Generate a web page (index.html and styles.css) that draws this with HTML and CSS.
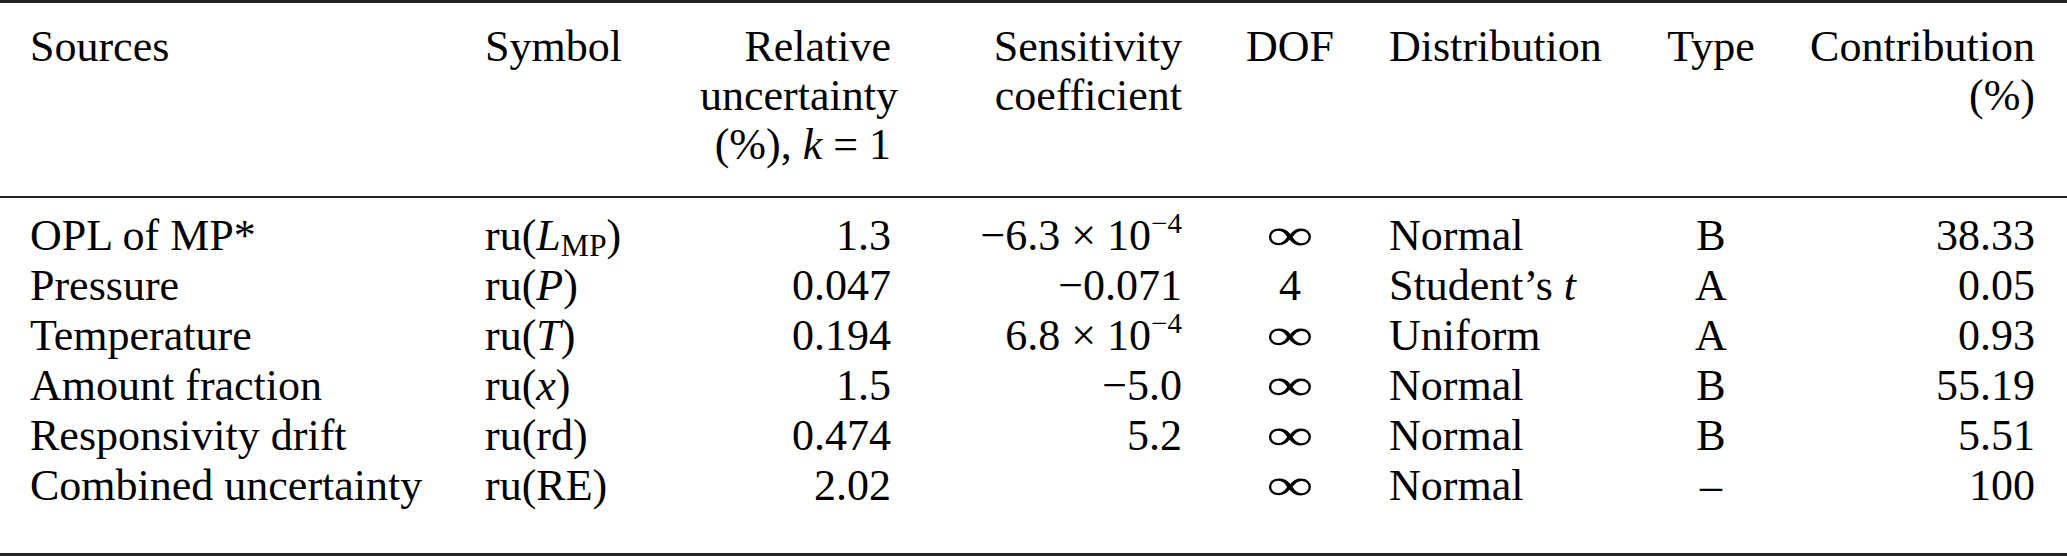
FILE: index.html
```html
<!DOCTYPE html>
<html lang="en">
<head>
<meta charset="utf-8">
<title>Uncertainty budget</title>
<link rel="stylesheet" href="styles.css">
</head>
<body>
<table class="budget">
  <colgroup>
    <col class="c1"><col class="c2"><col class="c3"><col class="c4">
    <col class="c5"><col class="c6"><col class="c7"><col class="c8">
  </colgroup>
  <thead>
    <tr>
      <th class="l first">Sources</th>
      <th class="l">Symbol</th>
      <th class="r">Relative<br>uncertainty<br>(%), <i>k</i> = 1</th>
      <th class="r">Sensitivity<br>coefficient</th>
      <th class="c dof">DOF</th>
      <th class="l dist">Distribution</th>
      <th class="c">Type</th>
      <th class="r last">Contribution<br>(%)</th>
    </tr>
  </thead>
  <tbody>
    <tr>
      <td class="l first">OPL of MP*</td>
      <td class="l">ru(<i>L</i><sub>MP</sub>)</td>
      <td class="r">1.3</td>
      <td class="r">−6.3 × 10<sup>−4</sup></td>
      <td class="c dof"><span class="inf">∞</span></td>
      <td class="l dist">Normal</td>
      <td class="c">B</td>
      <td class="r last">38.33</td>
    </tr>
    <tr>
      <td class="l first">Pressure</td>
      <td class="l">ru(<i>P</i>)</td>
      <td class="r">0.047</td>
      <td class="r">−0.071</td>
      <td class="c dof">4</td>
      <td class="l dist">Student’s <i>t</i></td>
      <td class="c">A</td>
      <td class="r last">0.05</td>
    </tr>
    <tr>
      <td class="l first">Temperature</td>
      <td class="l">ru(<i>T</i>)</td>
      <td class="r">0.194</td>
      <td class="r">6.8 × 10<sup>−4</sup></td>
      <td class="c dof"><span class="inf">∞</span></td>
      <td class="l dist">Uniform</td>
      <td class="c">A</td>
      <td class="r last">0.93</td>
    </tr>
    <tr>
      <td class="l first">Amount fraction</td>
      <td class="l">ru(<i>x</i>)</td>
      <td class="r">1.5</td>
      <td class="r">−5.0</td>
      <td class="c dof"><span class="inf">∞</span></td>
      <td class="l dist">Normal</td>
      <td class="c">B</td>
      <td class="r last">55.19</td>
    </tr>
    <tr>
      <td class="l first">Responsivity drift</td>
      <td class="l">ru(rd)</td>
      <td class="r">0.474</td>
      <td class="r">5.2</td>
      <td class="c dof"><span class="inf">∞</span></td>
      <td class="l dist">Normal</td>
      <td class="c">B</td>
      <td class="r last">5.51</td>
    </tr>
    <tr class="final">
      <td class="l first">Combined uncertainty</td>
      <td class="l">ru(RE)</td>
      <td class="r">2.02</td>
      <td class="r"></td>
      <td class="c dof"><span class="inf">∞</span></td>
      <td class="l dist">Normal</td>
      <td class="c">–</td>
      <td class="r last">100</td>
    </tr>
  </tbody>
</table>
</body>
</html>
```

FILE: styles.css
```css
html, body {
  margin: 0;
  padding: 0;
  background: #ffffff;
}

body {
  font-family: "Liberation Serif", "Times New Roman", serif;
  font-size: 44px;
  line-height: 49px;
  color: #000000;
}

.budget {
  width: 2067px;
  table-layout: fixed;
  border-collapse: collapse;
  border-top: 3px solid #222222;
  border-bottom: 3px solid #222222;
}

.c1 { width: 485px; }
.c2 { width: 215px; }
.c3 { width: 191px; }
.c4 { width: 291px; }
.c5 { width: 206px; }
.c6 { width: 252px; }
.c7 { width: 142px; }
.c8 { width: 285px; }

.budget th,
.budget td {
  padding: 0;
  font-weight: normal;
  vertical-align: top;
  white-space: nowrap;
}

.budget thead th {
  padding-top: 19px;
  padding-bottom: 27px;
  border-bottom: 2px solid #222222;
}

.budget tbody td {
  line-height: 50px;
}

.budget tbody tr:first-child td {
  padding-top: 13px;
}

.budget tbody tr.final td {
  padding-bottom: 42px;
}

.l { text-align: left; }
.r { text-align: right; }
.c { text-align: center; }

.budget .first { padding-left: 30px; }
.budget .last { padding-right: 32px; }
.budget .dof { padding-left: 10px; }
.budget .dist { padding-left: 1px; }

.inf {
  display: inline-block;
  line-height: 1;
  transform: scale(1.5, 1.02);
}

i {
  font-style: italic;
}

sup {
  font-size: 0.66em;
  line-height: 0;
  vertical-align: 0.6em;
}

sub {
  font-size: 0.72em;
  line-height: 0;
  vertical-align: -0.2em;
}
```
